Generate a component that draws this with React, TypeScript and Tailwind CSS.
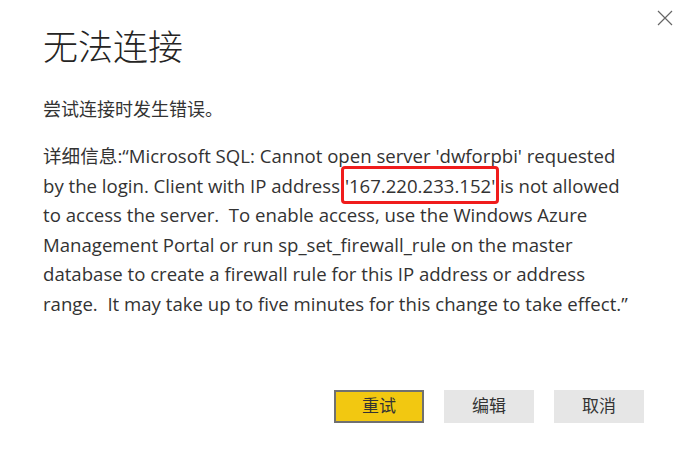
import React from "react";

const FONT = "font-['Segoe_UI','Open_Sans','Noto_Sans_CJK_SC',sans-serif]";

function CloseIcon() {
  return (
    <svg width="16" height="16" viewBox="0 0 16 16" className="text-[#666]">
      <path d="M1 1 L15 15 M15 1 L1 15" stroke="currentColor" strokeWidth="1.2" fill="none" />
    </svg>
  );
}

export default function App() {
  return (
    <div className={`relative h-[467px] w-[689px] bg-white text-[#333] ${FONT}`}>
      <button type="button" className="absolute right-[16px] top-[10px] p-0">
        <CloseIcon />
      </button>
      <div className="px-[43px] pt-[23px]">
        <h1 className="text-[35px] font-light leading-[48px] text-[#252423]">无法连接</h1>
        <p className="mt-[26px] text-[18px] leading-[24px]">尝试连接时发生错误。</p>
        <div className="mt-[20px] whitespace-nowrap text-[18.6px] leading-[29.6px]">
          <div>详细信息:“Microsoft SQL: Cannot open server 'dwforpbi' requested</div>
          <div>
            by the login. Client with IP address{" "}
            <span className="relative">
              '167.220.233.152'
              <span className="absolute -left-[4px] -right-[4px] -top-[7px] -bottom-[6px] rounded-[4px] border-[3px] border-[#f01c1c]" />
            </span>{" "}
            is not allowed
          </div>
          <div>to access the server.&nbsp; To enable access, use the Windows Azure</div>
          <div>Management Portal or run sp_set_firewall_rule on the master</div>
          <div>database to create a firewall rule for this IP address or address</div>
          <div>range.&nbsp; It may take up to five minutes for this change to take effect.”</div>
        </div>
        <div className="mt-[71px] flex justify-end gap-[20px] pr-[2px]">
          <button type="button" className="h-[33px] w-[90px] border-2 border-[#707070] bg-[#f2c811] text-[17px] text-[#333]">
            重试
          </button>
          <button type="button" className="h-[33px] w-[90px] bg-[#e6e6e6] text-[17px] text-[#333]">
            编辑
          </button>
          <button type="button" className="h-[33px] w-[90px] bg-[#e6e6e6] text-[17px] text-[#333]">
            取消
          </button>
        </div>
      </div>
    </div>
  );
}
